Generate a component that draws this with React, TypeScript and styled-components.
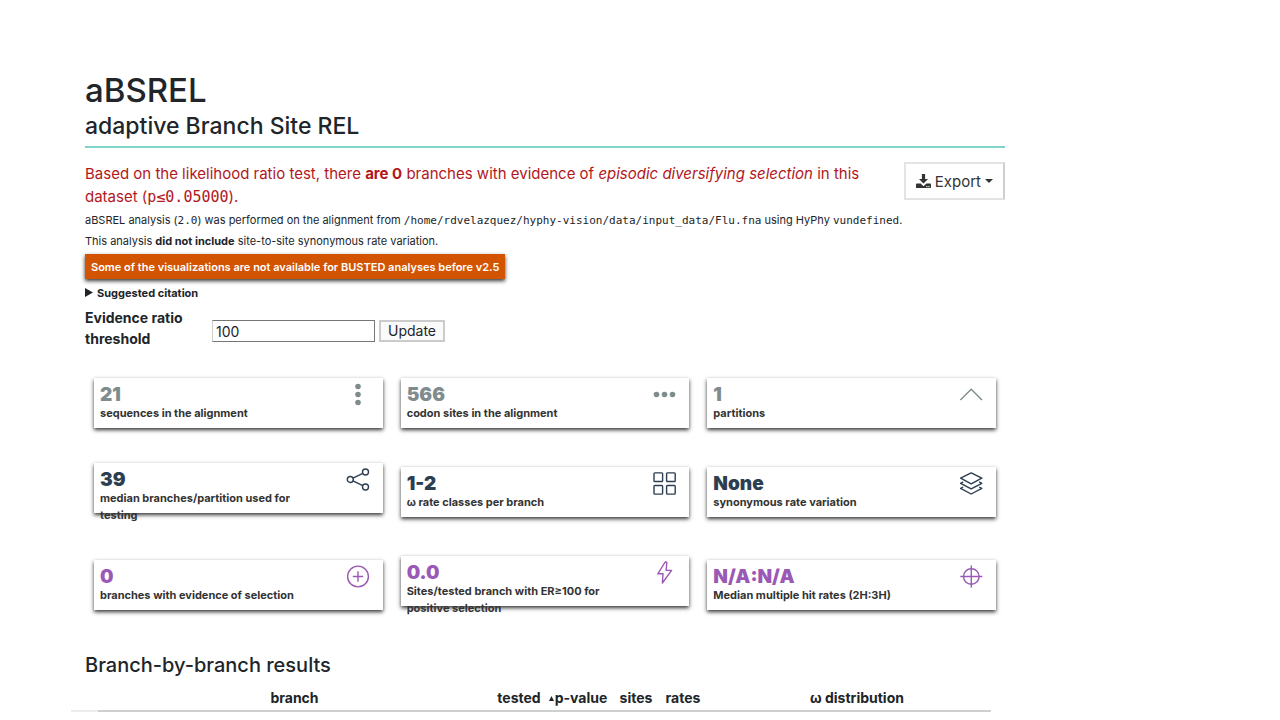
import React from "react";
import styled, { createGlobalStyle } from "styled-components";

const GlobalStyle = createGlobalStyle`
  *, *::before, *::after { box-sizing: border-box; }
  body {
    margin: 0;
    background: #fff;
    color: #212529;
    font-family: Inter, "Liberation Sans", sans-serif;
    font-size: 14px;
    line-height: 21px;
  }
`;

const Container = styled.div`
  max-width: 1140px;
  margin: 0 auto;
  padding-top: 68px;
`;

const Main = styled.main`
  width: 83.3333%;
  padding: 0 15px;
`;

const Header = styled.header`
  border-bottom: 2px solid #7fd4c9;
  padding-bottom: 6px;
`;

const Title = styled.h1`
  margin: 0;
  font-size: 33px;
  line-height: 44px;
  font-weight: 500;
`;

const Subtitle = styled.h2`
  margin: 0;
  font-size: 23px;
  line-height: 28px;
  font-weight: 500;
`;

const Intro = styled.div`
  display: flex;
  align-items: flex-start;
  justify-content: space-between;
  padding: 14px 0 1px;
`;

const Lead = styled.p`
  flex: 1;
  max-width: 790px;
  margin: 0;
  color: #b2171c;
  font-size: 15px;
  line-height: 23px;
`;

const Code = styled.code`
  font-family: "DejaVu Sans Mono", "Liberation Mono", monospace;
`;

const ExportButton = styled.button`
  display: flex;
  align-items: center;
  gap: 4px;
  height: 38px;
  padding: 0 10px;
  border: 2px solid #e3e3e3;
  border-right-color: #cfcfcf;
  background: #fff;
  color: #333;
  font-family: inherit;
  font-size: 15px;
  font-weight: 400;
`;

const Caret = styled.span`
  border: 4px solid transparent;
  border-top-color: #333;
  border-bottom: 0;
`;

const Note = styled.p`
  margin: 0;
  font-size: 11px;
  line-height: 21px;
`;

const Alert = styled.div`
  width: fit-content;
  margin-top: 2px;
  padding: 3px 6px 1px;
  background: #d35400;
  color: #fff;
  font-size: 11px;
  font-weight: 600;
  line-height: 21px;
  box-shadow: 0 2px 4px rgba(0, 0, 0, 0.8);
`;

const Citation = styled.details`
  margin-top: 4px;
  font-size: 11px;
  line-height: 20px;
`;

const Summary = styled.summary`
  display: flex;
  align-items: center;
  gap: 4px;
  font-weight: 700;
  list-style: none;
`;

const Marker = styled.svg`
  width: 8px;
  height: 10px;
`;

const Form = styled.form`
  display: flex;
  align-items: center;
  margin-top: 4px;
`;

const Label = styled.label`
  width: 127px;
  padding-right: 20px;
  font-size: 14px;
  line-height: 21px;
  font-weight: 700;
`;

const Controls = styled.div`
  display: flex;
  gap: 4px;
  padding-top: 6px;
`;

const NumberInput = styled.input`
  width: 163px;
  height: 22px;
  padding: 0 3px;
  border: 1px solid #767676;
  border-left-color: #cfcfcf;
  color: #212529;
  font-family: inherit;
  font-size: 14px;
`;

const UpdateButton = styled.button`
  height: 22px;
  padding: 0 7px;
  border: 2px solid #cbcbcb;
  background: #fafafa;
  color: #212529;
  font-family: inherit;
  font-size: 14px;
  line-height: 18px;
`;

const Cards = styled.section`
  display: grid;
  grid-template-columns: repeat(3, 1fr);
  align-items: center;
  column-gap: 18px;
  row-gap: 35px;
  margin-top: 29px;
  padding: 0 9px;
`;

const Card = styled.article<{ $tall?: boolean }>`
  display: flex;
  justify-content: space-between;
  height: 50px;
  margin-bottom: ${({ $tall }) => ($tall ? 8 : 0)}px;
  padding: 5px 13px 0 6px;
  background: #fff;
  box-shadow: 0 2px 4px rgba(0, 0, 0, 0.8);
`;

const CardText = styled.div`
  max-width: 220px;
`;

const Value = styled.h3<{ $color: string }>`
  margin: 0;
  color: ${({ $color }) => $color};
  font-size: 19px;
  line-height: 24px;
  font-weight: 900;
`;

const Caption = styled.p`
  margin: -2px 0 0;
  color: #333;
  font-size: 11px;
  line-height: 17px;
  font-weight: 700;
`;

const CardIcon = styled.svg<{ $color: string }>`
  width: 24px;
  height: 24px;
  flex: none;
  color: ${({ $color }) => $color};
  fill: none;
  stroke: currentColor;
  stroke-width: 1.4;
`;

const SectionTitle = styled.h2`
  margin: 38px 0 0;
  font-size: 20px;
  line-height: 26px;
  font-weight: 500;
`;

const Results = styled.table`
  width: 100%;
  margin: 9px 0 0 -14px;
  table-layout: fixed;
  border-collapse: separate;
  border-spacing: 0;
`;

const Col = styled.col<{ $width?: number }>`
  width: ${({ $width }) => ($width ? `${$width}px` : "auto")};
`;

const Th = styled.th<{ $faint?: boolean; $indent?: number }>`
  height: 25px;
  padding: 0 0 2px ${({ $indent = 0 }) => $indent}px;
  border-bottom: 2px solid ${({ $faint }) => ($faint ? "#ececec" : "#cdd0cf")};
  font-size: 14px;
  line-height: 21px;
  font-weight: 700;
  text-align: center;
  white-space: nowrap;
`;

const SortMark = styled.svg`
  width: 5px;
  height: 5px;
  margin-right: 1px;
  vertical-align: 2px;
`;

const GREY = "#7f8c8d";
const NAVY = "#2c3e50";
const PURPLE = "#9b59b6";

type CardData = {
  value: string;
  caption: string;
  color: string;
  tall?: boolean;
  icon: React.ReactNode;
};

const cards: CardData[] = [
  {
    value: "21",
    caption: "sequences in the alignment",
    color: GREY,
    icon: (
      <g fill="currentColor" stroke="none">
        <circle cx="12" cy="3.5" r="2.8" />
        <circle cx="12" cy="11.5" r="2.8" />
        <circle cx="12" cy="19.5" r="2.8" />
      </g>
    ),
  },
  {
    value: "566",
    caption: "codon sites in the alignment",
    color: GREY,
    icon: (
      <g fill="currentColor" stroke="none">
        <circle cx="4.5" cy="11.5" r="2.8" />
        <circle cx="12.5" cy="11.5" r="2.8" />
        <circle cx="20.5" cy="11.5" r="2.8" />
      </g>
    ),
  },
  {
    value: "1",
    caption: "partitions",
    color: GREY,
    icon: <path d="M1.4 17 12.2 6.2 23 17" />,
  },
  {
    value: "39",
    caption: "median branches/partition used for testing",
    color: NAVY,
    tall: true,
    icon: (
      <>
        <circle cx="4.3" cy="11.5" r="3" />
        <circle cx="19.5" cy="4" r="3" />
        <circle cx="19.5" cy="19" r="3" />
        <path d="m7 10.2 9.8-4.9M7 12.8l9.8 4.9" />
      </>
    ),
  },
  {
    value: "1-2",
    caption: "ω rate classes per branch",
    color: NAVY,
    icon: (
      <>
        <rect x="2" y="0.9" width="8.6" height="8.6" rx="0.8" />
        <rect x="14.6" y="0.9" width="8.6" height="8.6" rx="0.8" />
        <rect x="2" y="13.5" width="8.6" height="8.6" rx="0.8" />
        <rect x="14.6" y="13.5" width="8.6" height="8.6" rx="0.8" />
      </>
    ),
  },
  {
    value: "None",
    caption: "synonymous rate variation",
    color: NAVY,
    icon: (
      <g strokeLinejoin="round">
        <path d="M12.200 .9 22.800 6.200 12.200 11.800 1.600 6.200Z" />
        <path d="M4.200 9.900 1.600 11.300 12.200 16.900l10.600-5.600L20.200 9.900" />
        <path d="m4.200 15-2.600 1.400L12.200 22l10.600-5.600L20.200 15" />
      </g>
    ),
  },
  {
    value: "0",
    caption: "branches with evidence of selection",
    color: PURPLE,
    icon: (
      <>
        <circle cx="12" cy="11.5" r="10.4" />
        <path d="M12 6.3v10.4M6.8 11.5h10.4" />
      </>
    ),
  },
  {
    value: "0.0",
    caption: "Sites/tested branch with ER≥100 for positive selection",
    color: PURPLE,
    tall: true,
    icon: (
      <path d="M13.2 1 5.8 12.8H11L10.4 22l9.2-12.6h-5.4L14.8 1.2Z" strokeLinejoin="round" />
    ),
  },
  {
    value: "N/A:N/A",
    caption: "Median multiple hit rates (2H:3H)",
    color: PURPLE,
    icon: (
      <>
        <circle cx="12.3" cy="11.5" r="7.8" />
        <path d="M12.3 .5v22M1.300 11.5h22" />
      </>
    ),
  },
];

export default function App() {
  return (
    <>
      <GlobalStyle />
      <Container>
        <Main>
          <Header>
            <Title>aBSREL</Title>
            <Subtitle>adaptive Branch Site REL</Subtitle>
          </Header>
          <Intro>
            <Lead>
              Based on the likelihood ratio test, there <strong>are 0</strong> branches with
              evidence of <em>episodic diversifying selection</em> in this dataset (
              <Code>p≤0.05000</Code>).
            </Lead>
            <ExportButton type="button">
              <svg width="15" height="15" viewBox="0 0 16 16" fill="#333" aria-hidden="true">
                <path d="M6.3 0h3.4v5.2h3.1L8 10.2 3.2 5.2h3.1Z" />
                <path
                  fillRule="evenodd"
                  d="M1 10.2h3.9L8 13l3.1-2.8H15a1 1 0 0 1 1 1V14a1 1 0 0 1-1 1H1a1 1 0 0 1-1-1v-2.8a1 1 0 0 1 1-1Zm10 2.6v1.2h1.2v-1.2Zm2.2 0v1.2h1.2v-1.2Z"
                />
              </svg>
              Export
              <Caret />
            </ExportButton>
          </Intro>
          <Note>
            aBSREL analysis (<Code>2.0</Code>) was performed on the alignment from{" "}
            <Code>/home/rdvelazquez/hyphy-vision/data/input_data/Flu.fna</Code> using HyPhy{" "}
            <Code>vundefined</Code>.
          </Note>
          <Note>
            This analysis <strong>did not include</strong> site-to-site synonymous rate variation.
          </Note>
          <Alert>Some of the visualizations are not available for BUSTED analyses before v2.5</Alert>
          <Citation>
            <Summary>
              <Marker viewBox="0 0 8 10" aria-hidden="true">
                <path d="M0 0v9l8-4.5Z" fill="#212529" />
              </Marker>
              Suggested citation
            </Summary>
          </Citation>
          <Form onSubmit={(e) => e.preventDefault()}>
            <Label htmlFor="threshold">Evidence ratio threshold</Label>
            <Controls>
              <NumberInput id="threshold" type="text" defaultValue="100" />
              <UpdateButton type="submit">Update</UpdateButton>
            </Controls>
          </Form>
          <Cards>
            {cards.map((card) => (
              <Card key={card.caption} $tall={card.tall}>
                <CardText>
                  <Value $color={card.color}>{card.value}</Value>
                  <Caption>{card.caption}</Caption>
                </CardText>
                <CardIcon $color={card.color} viewBox="0 0 24 24" aria-hidden="true">
                  {card.icon}
                </CardIcon>
              </Card>
            ))}
          </Cards>
          <SectionTitle>Branch-by-branch results</SectionTitle>
          <Results>
            <colgroup>
              <Col $width={27} />
              <Col />
              <Col $width={56} />
              <Col $width={62} />
              <Col $width={54} />
              <Col $width={40} />
              <Col $width={288} />
            </colgroup>
            <thead>
              <tr>
                <Th $faint />
                <Th>branch</Th>
                <Th>tested</Th>
                <Th>
                  <SortMark viewBox="0 0 5 5" aria-hidden="true">
                    <path d="M2.5 0 5 5H0Z" fill="#212529" />
                  </SortMark>
                  p-value
                </Th>
                <Th>sites</Th>
                <Th>rates</Th>
                <Th $indent={20}>ω distribution</Th>
              </tr>
            </thead>
          </Results>
        </Main>
      </Container>
    </>
  );
}
